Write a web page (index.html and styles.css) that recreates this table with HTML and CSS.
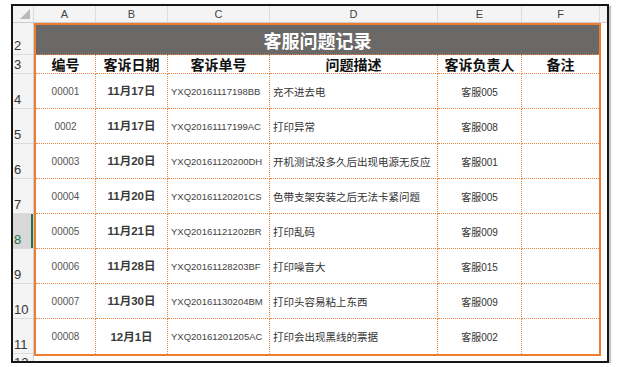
FILE: index.html
```html
<!DOCTYPE html>
<html>
<head>
    <meta charset="utf-8" />
    <title>客服问题记录</title>
    <link rel="stylesheet" href="styles.css">
</head>
<body>
    <div class="sheet">
        <div class="colhead">
            <div class="corner">
                <svg width="20" height="16" viewBox="0 0 20 16"><polygon points="17,3 17,13 7,13" fill="#b9b9b9" /></svg>
            </div>
            <div class="col">A</div>
            <div class="col">B</div>
            <div class="col">C</div>
            <div class="col">D</div>
            <div class="col">E</div>
            <div class="col">F</div>
            <div class="col col-rest"></div>
        </div>
        <div class="main">
            <div class="rowhead">
                <div class="rn rn-title">2</div>
                <div class="rn rn-head">3</div>
                <div class="rn">4</div>
                <div class="rn">5</div>
                <div class="rn">6</div>
                <div class="rn">7</div>
                <div class="rn rn-sel">8</div>
                <div class="rn">9</div>
                <div class="rn">10</div>
                <div class="rn">11</div>
                <div class="rn rn-cut">12</div>
            </div>
            <div class="records">
                <div class="cell title">客服问题记录</div>
                <div class="rec">
                    <div class="cell th">编号</div>
                    <div class="cell th">客诉日期</div>
                    <div class="cell th">客诉单号</div>
                    <div class="cell th">问题描述</div>
                    <div class="cell th">客诉负责人</div>
                    <div class="cell th">备注</div>
                </div>
                <div class="rec">
                    <div class="cell num">00001</div>
                    <div class="cell date">11月17日</div>
                    <div class="cell code">YXQ20161117198BB</div>
                    <div class="cell desc">充不进去电</div>
                    <div class="cell owner">客服005</div>
                    <div class="cell"></div>
                </div>
                <div class="rec">
                    <div class="cell num">0002</div>
                    <div class="cell date">11月17日</div>
                    <div class="cell code">YXQ20161117199AC</div>
                    <div class="cell desc">打印异常</div>
                    <div class="cell owner">客服008</div>
                    <div class="cell"></div>
                </div>
                <div class="rec">
                    <div class="cell num">00003</div>
                    <div class="cell date">11月20日</div>
                    <div class="cell code">YXQ20161120200DH</div>
                    <div class="cell desc">开机测试没多久后出现电源无反应</div>
                    <div class="cell owner">客服001</div>
                    <div class="cell"></div>
                </div>
                <div class="rec">
                    <div class="cell num">00004</div>
                    <div class="cell date">11月20日</div>
                    <div class="cell code">YXQ20161120201CS</div>
                    <div class="cell desc">色带支架安装之后无法卡紧问题</div>
                    <div class="cell owner">客服005</div>
                    <div class="cell"></div>
                </div>
                <div class="rec">
                    <div class="cell num">00005</div>
                    <div class="cell date">11月21日</div>
                    <div class="cell code">YXQ20161121202BR</div>
                    <div class="cell desc">打印乱码</div>
                    <div class="cell owner">客服009</div>
                    <div class="cell"></div>
                </div>
                <div class="rec">
                    <div class="cell num">00006</div>
                    <div class="cell date">11月28日</div>
                    <div class="cell code">YXQ20161128203BF</div>
                    <div class="cell desc">打印噪音大</div>
                    <div class="cell owner">客服015</div>
                    <div class="cell"></div>
                </div>
                <div class="rec">
                    <div class="cell num">00007</div>
                    <div class="cell date">11月30日</div>
                    <div class="cell code">YXQ20161130204BM</div>
                    <div class="cell desc">打印头容易粘上东西</div>
                    <div class="cell owner">客服009</div>
                    <div class="cell"></div>
                </div>
                <div class="rec">
                    <div class="cell num">00008</div>
                    <div class="cell date">12月1日</div>
                    <div class="cell code">YXQ20161201205AC</div>
                    <div class="cell desc">打印会出现黑线的票据</div>
                    <div class="cell owner">客服002</div>
                    <div class="cell"></div>
                </div>
            </div>
            <div class="gutter"></div>
        </div>
    </div>
</body>
</html>
```

FILE: styles.css
```css
body {
    margin: 0;
    background: #fff;
    font-family: "Liberation Sans", "Noto Sans CJK SC", sans-serif;
}
.sheet {
    margin: 4px 0 0 11px;
    width: 598px;
    height: 359px;
    box-sizing: border-box;
    border: 2px solid #161616;
    background: #fff;
    overflow: hidden;
    display: flex;
    flex-direction: column;
    box-shadow: 2px 2px 1px #c4c4c4;
}
.colhead {
    flex: none;
    height: 17px;
    box-sizing: border-box;
    display: grid;
    grid-template-columns: 21px 62px 72px 102px 168px 84px 78px 1fr;
    background: #f4f4f4;
    border-bottom: 1px solid #cdcdcd;
}
.corner {
    border-right: 1px solid #dcdcdc;
    overflow: hidden;
}
.col {
    border-right: 1px solid #dcdcdc;
    font-size: 11px;
    color: #444;
    display: flex;
    align-items: center;
    justify-content: center;
}
.col-rest {
    border-right: none;
}
.main {
    flex: 1;
    min-height: 0;
    display: flex;
}
.rowhead {
    flex: none;
    width: 21px;
    box-sizing: border-box;
    background: #f4f4f4;
    border-right: 1px solid #cdcdcd;
    display: flex;
    flex-direction: column;
}
.rn {
    flex: none;
    height: 35px;
    box-sizing: border-box;
    border-bottom: 1px solid #dcdcdc;
    padding: 0 0 1px 1px;
    font-size: 13px;
    color: #333;
    display: flex;
    align-items: flex-end;
}
.rn-title {
    height: 32px;
}
.rn-head {
    height: 19px;
}
.rn-sel {
    background: #d8d8d8;
    color: #217346;
    box-shadow: inset -2px 0 #217346;
}
.rn-cut {
    flex: 1;
    align-items: flex-start;
    padding-top: 1px;
    border-bottom: none;
    overflow: hidden;
}
.records {
    flex: none;
    align-self: flex-start;
    width: 567px;
    box-sizing: border-box;
    border: 2px solid #ed7d31;
    display: grid;
    grid-template-columns: 60px 72px 102px 168px 84px 1fr;
    grid-template-rows: 30px 19px repeat(8, 35px);
}
.rec {
    display: contents;
}
.cell {
    box-sizing: border-box;
    border-right: 1px dotted #ec8640;
    border-bottom: 1px dotted #ec8640;
    display: flex;
    align-items: center;
    justify-content: center;
    white-space: nowrap;
    overflow: hidden;
    font-size: 10px;
    color: #444;
}
.cell:last-child {
    border-right: none;
}
.rec:last-child .cell {
    border-bottom: none;
}
.title {
    grid-column: 1 / -1;
    background: #6b6968;
    color: #fff;
    font-size: 18px;
    font-weight: bold;
    border-right: none;
}
.th {
    font-size: 14px;
    font-weight: bold;
    color: #111;
}
.num {
    color: #555;
}
.date {
    font-size: 11.5px;
    font-weight: bold;
    color: #3a3a3a;
    padding-bottom: 2px;
}
.code {
    justify-content: flex-start;
    padding-left: 3px;
    font-size: 9.5px;
}
.desc {
    justify-content: flex-start;
    padding-left: 3px;
    font-size: 10.5px;
    color: #333;
}
.owner {
    color: #333;
}
.gutter {
    flex: 1;
}
```
